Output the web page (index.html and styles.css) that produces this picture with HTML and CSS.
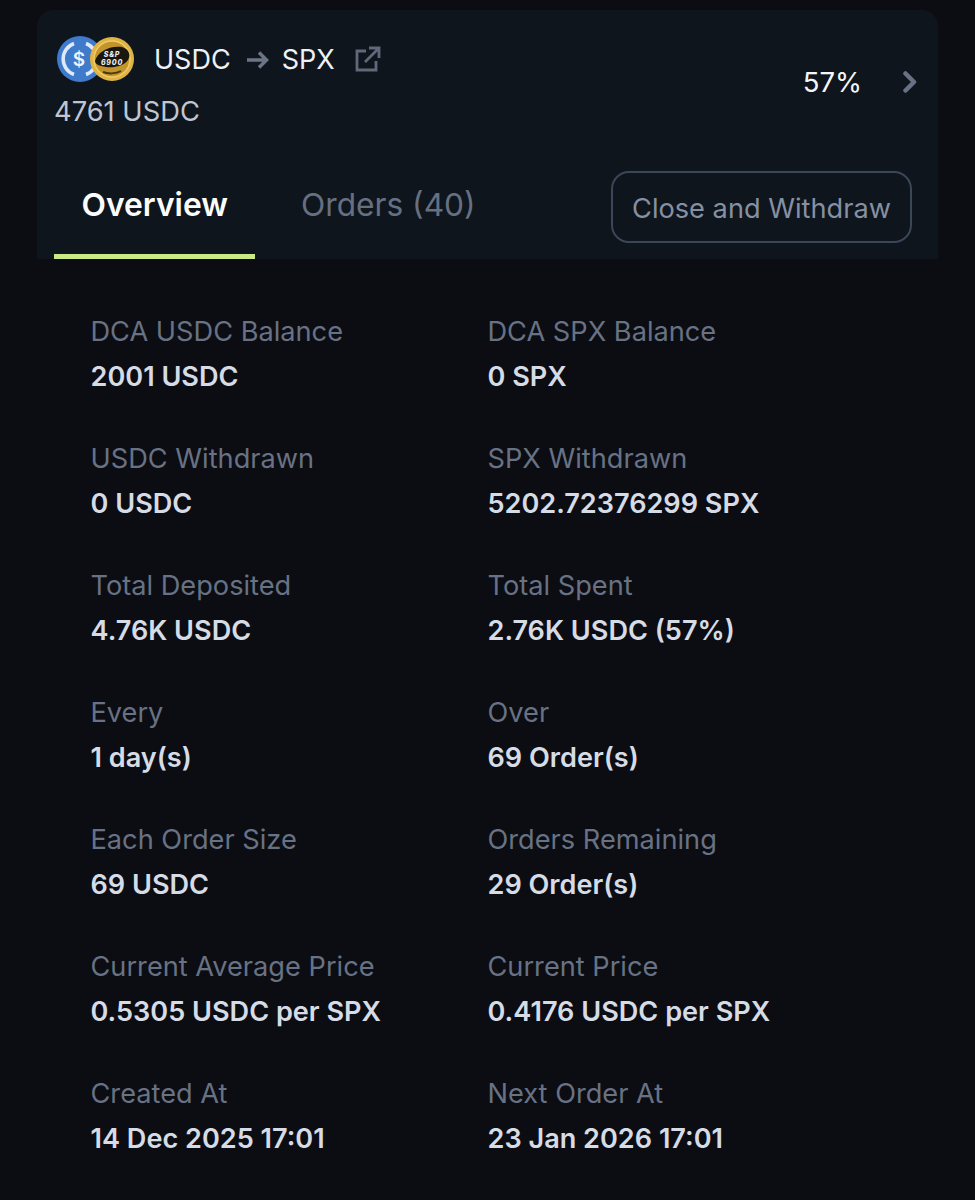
FILE: index.html
```html
<!DOCTYPE html>
<html lang="en">
<head>
    <meta charset="UTF-8">
    <title>DCA Overview</title>
    <link rel="stylesheet" href="styles.css">
</head>
<body>

<div class="card">
    <!-- Pair summary -->
    <div class="summary">
        <div class="summary-left">
            <div class="pair">
                <div class="coins">
                    <svg class="coin" viewBox="0 0 46 46" width="46" height="46">
                        <circle cx="23" cy="23" r="23" fill="#3f7bcb"/>
                        <path d="M17 7.500a16.500 16.500 0 0 0 0 31M29 7.500a16.500 16.500 0 0 1 0 31" fill="none" stroke="#dfe9f7" stroke-width="3.500"/>
                        <text x="22" y="29.500" text-anchor="middle" class="coin-dollar">$</text>
                    </svg>
                    <svg class="coin coin-over" viewBox="0 0 44 44" width="44" height="44">
                        <circle cx="22" cy="22" r="22" fill="#e0b444"/>
                        <circle cx="22" cy="22" r="18" fill="#c2942a" stroke="#efcb68" stroke-width="1.500"/>
                        <path d="M5 24C7 15 20 8 32 10c7 2 9 8 6 13-4 6-14 8-22 7-7-1-11-3-11-6z" fill="#1a1710"/>
                        <path d="M13 35c5 2 13 2 18-1" fill="none" stroke="#4a370d" stroke-width="2"/>
                        <text x="22" y="20" text-anchor="middle" class="coin-label">S&amp;P</text>
                        <text x="22" y="27.500" text-anchor="middle" class="coin-label">6900</text>
                    </svg>
                </div>
                <span class="token">USDC</span>
                <svg class="arrow" viewBox="0 0 24 24" width="24" height="24">
                    <path d="M1 12h20M13 4.500L20.500 12 13 19.500" fill="none" stroke="#6b7585" stroke-width="3.500"/>
                </svg>
                <span class="token">SPX</span>
                <svg class="ext-link" viewBox="0 0 26 26" width="26" height="26">
                    <path d="M11 5H2v19h19v-9M14 2h10v10M24 2L10 16" fill="none" stroke="#5f6979" stroke-width="2.800"/>
                </svg>
            </div>
            <div class="amount">4761 USDC</div>
        </div>
        <div class="summary-right">
            <span class="percent">57%</span>
            <svg class="chevron" viewBox="0 0 16 24" width="16" height="24">
                <path d="M2.500 3.500L11 12l-8.500 8.500" fill="none" stroke="#687284" stroke-width="4.500" stroke-linecap="round" stroke-linejoin="round"/>
            </svg>
        </div>
    </div>

    <!-- Tabs -->
    <div class="tabs">
        <div class="tab tab-active">Overview</div>
        <div class="tab">Orders (40)</div>
        <button class="btn-close">Close and Withdraw</button>
    </div>
</div>

<!-- Details -->
<div class="details">
    <div class="item"><div class="label">DCA USDC Balance</div><div class="value">2001 USDC</div></div>
    <div class="item"><div class="label">DCA SPX Balance</div><div class="value">0 SPX</div></div>

    <div class="item"><div class="label">USDC Withdrawn</div><div class="value">0 USDC</div></div>
    <div class="item"><div class="label">SPX Withdrawn</div><div class="value">5202.72376299 SPX</div></div>

    <div class="item"><div class="label">Total Deposited</div><div class="value">4.76K USDC</div></div>
    <div class="item"><div class="label">Total Spent</div><div class="value">2.76K USDC (57%)</div></div>

    <div class="item"><div class="label">Every</div><div class="value">1 day(s)</div></div>
    <div class="item"><div class="label">Over</div><div class="value">69 Order(s)</div></div>

    <div class="item"><div class="label">Each Order Size</div><div class="value">69 USDC</div></div>
    <div class="item"><div class="label">Orders Remaining</div><div class="value">29 Order(s)</div></div>

    <div class="item"><div class="label">Current Average Price</div><div class="value">0.5305 USDC per SPX</div></div>
    <div class="item"><div class="label">Current Price</div><div class="value">0.4176 USDC per SPX</div></div>

    <div class="item"><div class="label">Created At</div><div class="value">14 Dec 2025 17:01</div></div>
    <div class="item"><div class="label">Next Order At</div><div class="value">23 Jan 2026 17:01</div></div>
</div>

</body>
</html>
```
FILE: styles.css
```css
html, body {
    height: 1200px;
    overflow: hidden;
}

body {
    margin: 0;
    padding-top: 10px;
    box-sizing: border-box;
    font-family: 'Inter', sans-serif;
    background: #0b0d13;
    color: #d9dfe9;
}

.card {
    width: 901px;
    height: 249px;
    margin-left: 37px;
    background: #0f151c;
    border-radius: 16px 16px 0 0;
    display: flex;
    flex-direction: column;
}

.summary {
    display: flex;
    justify-content: space-between;
    padding: 26px 19px 0 18px;
    height: 127px;
    box-sizing: border-box;
}

.pair {
    display: flex;
    align-items: center;
    height: 46px;
    margin-left: 2px;
}

.coins {
    display: flex;
    width: 78px;
    margin-right: 19px;
}

.coin {
    flex: none;
}

.coin-over {
    margin-left: -13px;
    margin-top: 1px;
}

.coin-dollar {
    font-size: 19px;
    font-weight: 600;
    fill: #eef3fb;
}

.coin-label {
    font-size: 7px;
    font-weight: 800;
    font-style: italic;
    letter-spacing: 0.8px;
    fill: #ececec;
}

.token {
    font-size: 27px;
    color: #eef1f6;
}

.arrow {
    margin: 2px 12px 0 15px;
}

.ext-link {
    margin-left: 20px;
}

.amount {
    font-size: 27.300px;
    line-height: 32px;
    color: #bfc6d2;
    margin-top: 14px;
    margin-left: -1px;
}

.summary-right {
    display: flex;
    align-items: center;
    height: 92px;
}

.percent {
    font-size: 27.500px;
    color: #f4f6f9;
}

.chevron {
    margin-left: 41px;
}

.tabs {
    display: flex;
    flex: 1;
    padding-left: 17px;
    position: relative;
}

.tab {
    width: 201px;
    height: 122px;
    box-sizing: border-box;
    padding: 46px 26px 0;
    font-size: 31.700px;
    line-height: 44px;
    color: #667081;
    white-space: nowrap;
}

.tab-active {
    font-size: 31.800px;
    padding-left: 27.500px;
    color: #fbfcfd;
    font-weight: 600;
    border-bottom: 5px solid #c8e985;
    margin-right: 20px;
}

.btn-close {
    position: absolute;
    left: 574px;
    top: 34px;
    width: 301px;
    height: 72px;
    box-sizing: border-box;
    background: transparent;
    border: 2px solid #3c4659;
    border-radius: 18px;
    font-family: inherit;
    font-size: 27.200px;
    color: #8590a3;
    padding: 3px 0 0;
    white-space: nowrap;
}

.details {
    display: grid;
    grid-template-columns: 397px 397px;
    grid-auto-rows: 127px;
    margin-left: 90.500px;
    padding-top: 56px;
}

.label {
    font-size: 27.200px;
    line-height: 34px;
    color: #687284;
    white-space: nowrap;
}

.value {
    font-size: 27.100px;
    line-height: 34px;
    margin-top: 11px;
    font-weight: 600;
    color: #d6dce6;
    white-space: nowrap;
}
```
